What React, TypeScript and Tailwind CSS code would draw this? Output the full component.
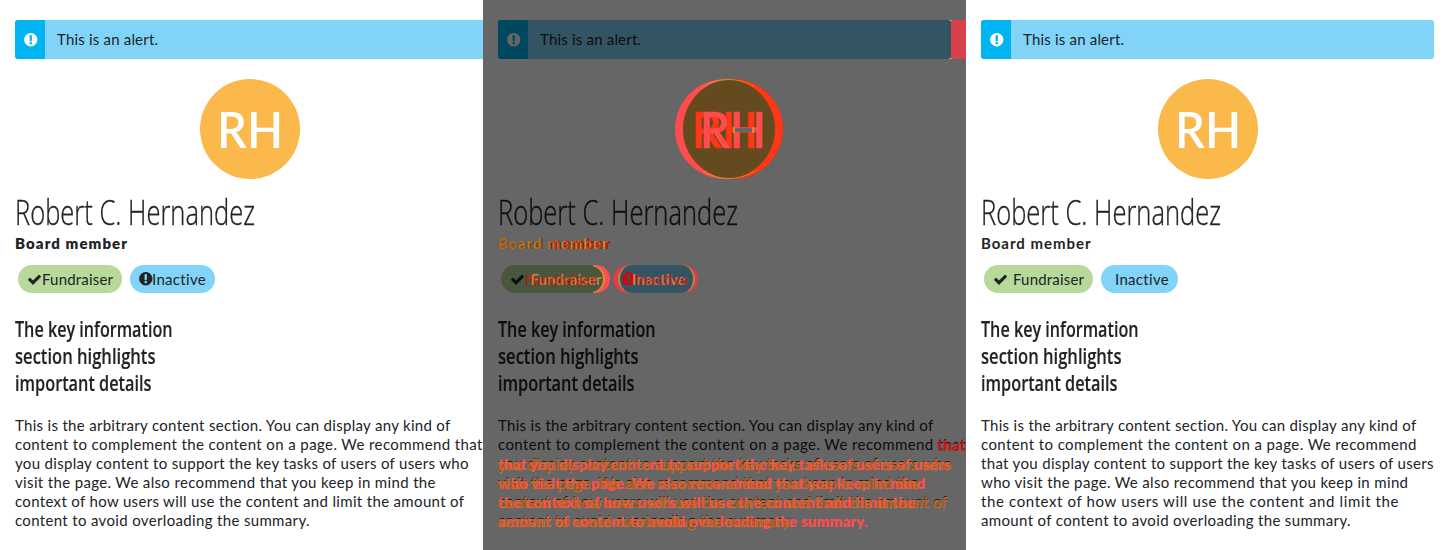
import { useLayoutEffect, useRef, useState } from "react";

type FitProps = { text: string; width: number; squeeze?: boolean; className?: string };

/* Sets a run of text to an exact width, by tracking or by condensing the glyphs. */
function Fit({ text, width, squeeze = false, className = "" }: FitProps) {
  const ref = useRef<HTMLSpanElement>(null);
  const [natural, setNatural] = useState(0);
  useLayoutEffect(() => {
    if (ref.current && !natural) setNatural(ref.current.getBoundingClientRect().width);
  }, [natural]);
  const style = !natural
    ? {}
    : squeeze
      ? { transform: `scaleX(${width / natural})` }
      : { letterSpacing: `${(width - natural) / (text.length - 1)}px` };
  return (
    <span ref={ref} style={style} className={`inline-block w-max origin-left whitespace-nowrap ${className}`}>
      {text}
    </span>
  );
}

function Check({ className = "" }: { className?: string }) {
  return (
    <svg viewBox="0 0 1792 1792" fill="currentColor" className={`size-[15px] shrink-0 ${className}`}>
      <path d="M1671 566q0 40-28 68l-724 724-136 136q-28 28-68 28t-68-28l-136-136-362-362q-28-28-28-68t28-68l136-136q28-28 68-28t68 28l294 295 656-657q28-28 68-28t68 28l136 136q28 28 28 68z" />
    </svg>
  );
}

function Exclamation({ className = "" }: { className?: string }) {
  return (
    <svg viewBox="0 0 1792 1792" fill="currentColor" className={`size-[15.5px] shrink-0 ${className}`}>
      <path d="M896 128q209 0 385.500 103t279.500 279.500 103 385.500-103 385.500-279.500 279.500-385.500 103-385.500-103-279.500-279.500-103-385.500 103-385.500 279.500-279.500 385.500-103zm128 1247v-190q0-14-9-23.500t-22-9.500h-192q-13 0-23 10t-10 23v188q0 13 10 23t23 10h192q13 0 22-9.500t9-23.500zm-2-344l18-621q0-12-10-18-10-8-24-8h-220q-14 0-24 8-10 6-10 18l17 621q0 10 10 17.500t24 7.500h185q14 0 23.500-7.500t10.500-17.500z" />
    </svg>
  );
}

const beforeLines: [string, number][] = [
  ["This is the arbitrary content section. You can display any kind of", 435.5],
  ["content to complement the content on a page. We recommend that", 467.5],
  ["you display content to support the key tasks of users of users who", 453.5],
  ["visit the page. We also recommend that you keep in mind the", 420.5],
  ["context of how users will use the content and limit the amount of", 449],
  ["content to avoid overloading the summary.", 294.5],
];

const afterLines: [string, number][] = [
  ["This is the arbitrary content section. You can display any kind of", 435.5],
  ["content to complement the content on a page. We recommend", 435.5],
  ["that you display content to support the key tasks of users of users", 452.5],
  ["who visit the page. We also recommend that you keep in mind", 427],
  ["the context of how users will use the content and limit the", 417.5],
  ["amount of content to avoid overloading the summary.", 369.5],
];

function Lines({ lines, className = "" }: { lines: [string, number][]; className?: string }) {
  return (
    <div className={`flex flex-col text-[15px] leading-[19px] ${className}`}>
      {lines.map(([text, width]) => (
        <div key={text} className="h-[19px]">
          <Fit text={text} width={width} />
        </div>
      ))}
    </div>
  );
}

function Summary({ after = false }: { after?: boolean }) {
  return (
    <section className="flex h-[550px] w-[483px] flex-col overflow-hidden bg-white pl-[15px] pt-5 text-[#212327]">
      <div
        className={`flex h-[39px] shrink-0 overflow-hidden bg-[#81d4f7] ${after ? "w-[453px] rounded-[3px]" : "w-[468px] rounded-l-[3px]"}`}
      >
        <div className="flex w-[30px] items-center justify-center bg-[#00b4f1] pl-px text-white">
          <Exclamation />
        </div>
        <div className="pl-3 text-[15px] leading-[39px]">
          <Fit text="This is an alert." width={101} />
        </div>
      </div>

      <div className={`mt-5 flex shrink-0 ${after ? "pl-[177px]" : "pl-[185px]"}`}>
        <div className="flex size-[100px] justify-start rounded-full bg-[#fbb84b] pl-[17px] text-[50px] font-semibold leading-[101px] text-white">
          <Fit text="RH" width={66} squeeze />
        </div>
      </div>

      <h1 className="mt-[13px] h-10 shrink-0 font-['Open_Sans','Noto_Sans',sans-serif] text-[34px] font-light leading-10 [-webkit-text-stroke:0.35px_currentColor]">
        <Fit text="Robert C. Hernandez" width={240} squeeze />
      </h1>
      <div className="mt-0.5 h-[19px] shrink-0 text-[15px] leading-[19px]">
        <Fit
          text="Board member"
          width={after ? 109.5 : 112}
          className={after ? "font-bold" : "font-extrabold"}
        />
      </div>

      <div className="ml-[3px] mt-3 flex h-7 shrink-0 gap-2 text-[15px]">
        <div className={`flex items-center rounded-full bg-[#b7da9b] pl-[9px] ${after ? "w-[109px]" : "w-[104px]"}`}>
          <Check />
          <span className={after ? "pl-[5px] leading-7" : "pt-px leading-[27px]"}>
            <Fit text="Fundraiser" width={71} />
          </span>
        </div>
        <div className={`flex items-center rounded-full bg-[#81d4f7] ${after ? "w-[77px] pl-[14px]" : "w-[85px] pl-2"}`}>
          {!after && <Exclamation className="-mr-1" />}
          <span className={after ? "leading-7" : "pl-[2.5px] pt-px leading-[27px]"}>
            <Fit text="Inactive" width={54} />
          </span>
        </div>
      </div>

      <h2 className="mt-[23px] flex shrink-0 flex-col font-['Open_Sans','Noto_Sans',sans-serif] text-[21px] font-semibold leading-[27px] [-webkit-text-stroke:0.15px_currentColor]">
        <Fit text="The key information" width={157.5} squeeze />
        <Fit text="section highlights" width={140.5} squeeze />
        <Fit text="important details" width={136.5} squeeze />
      </h2>
      <Lines lines={after ? afterLines : beforeLines} className="mt-[19px]" />
    </section>
  );
}

/* Layer of differing pixels drawn over the dimmed summary. */
function Changes() {
  return (
    <>
      <div className="absolute right-0 top-5 h-[39px] w-[15px] bg-[#d9404b]" />
      <i className="absolute right-[14px] top-5 h-px w-[3px] bg-[#d9903f]" />
      <i className="absolute right-[14px] top-[58px] h-px w-[3px] bg-[#d9903f]" />

      <svg viewBox="0 0 108 100" className="absolute left-[192px] top-[79px] h-[100px] w-[108px]">
        <clipPath id="shared">
          <circle cx="50" cy="50" r="50" />
        </clipPath>
        <circle cx="50" cy="50" r="50" fill="#ff4c4c" />
        <circle cx="58" cy="50" r="50" fill="#ff3717" />
        <circle cx="58" cy="50" r="50" fill="#644a1e" clipPath="url(#shared)" />
        <path d="M28 8Q40 .5 54 .5M54 99.500Q40 99.500 28 92" fill="none" stroke="#d9903f" />
        <path d="M54 .5Q67 .5 80 8M54 99.500Q67 99.500 80 92" fill="none" stroke="#d97d18" />
      </svg>
      <div className="absolute left-[209px] top-[79px] text-[50px] font-semibold leading-[101px] text-[#ff3717] [-webkit-text-stroke:0.6px_currentColor]">
        <Fit text="RH" width={66} squeeze />
      </div>
      <div className="absolute left-[217px] top-[79px] text-[50px] font-semibold leading-[101px] text-[#ff4c4c] [-webkit-text-stroke:0.6px_currentColor]">
        <Fit text="RH" width={66} squeeze />
      </div>
      <i className="absolute left-[252px] top-32 h-1 w-[17px] bg-[#666]" />
      <i className="absolute left-[250px] top-[127px] h-1.5 w-0.5 bg-[#d98a30]" />
      <i className="absolute left-[269px] top-[127px] h-1.5 w-0.5 bg-[#d98a30]" />

      <div className="absolute left-[15px] top-[234px] text-[15px] font-bold leading-[19px] text-[#d98a30]">
        <Fit text="Board member" width={109.5} />
      </div>
      <div className="absolute left-[15px] top-[234px] text-[15px] font-extrabold leading-[19px]">
        <Fit
          text="Board member"
          width={112}
          className="bg-linear-to-r from-[#a05a20]/70 from-35% to-[#d03010]/85 to-50% bg-clip-text text-transparent"
        />
      </div>

      <div className="absolute left-[18px] top-[265px] h-7 w-[109px] rounded-full bg-[#ff4c4c] [clip-path:inset(0_0_0_92px)]" />
      <div className="absolute left-[18px] top-[265px] h-7 w-[104px] rounded-full border-y border-r-2 border-[#d9903f] bg-[#495740] [clip-path:inset(0_0_0_92px)]" />
      <div className="absolute left-[130px] top-[265px] h-7 w-[85px] rounded-full bg-[#d9404b]" />
      <div className="absolute left-[135px] top-[265px] h-7 w-[77px] rounded-full border-x-2 border-[#b8893f] bg-[#335563]" />
      <Exclamation className="absolute left-[137.5px] top-[271px] text-[#c80a0a]" />
      <div className="absolute left-[47.5px] top-[265px] text-[15px] font-semibold leading-7 text-[#d98138]">
        <Fit text="Fundraiser" width={71} />
      </div>
      <div className="absolute left-[42px] top-[266px] text-[15px] font-semibold leading-[27px] text-[#d0301a]/85">
        <Fit text="Fundraiser" width={71} />
      </div>
      <div className="absolute left-[149px] top-[265px] text-[15px] font-semibold leading-7 text-[#c88448]">
        <Fit text="Inactive" width={54} />
      </div>
      <div className="absolute left-[152px] top-[266px] text-[15px] font-semibold leading-[27px] text-[#c92018]/85">
        <Fit text="Inactive" width={54} />
      </div>

      <div className="absolute left-[454px] top-[436px] text-[15px] font-bold leading-[19px] text-[#df1212]">
        <Fit text="that" width={28.5} />
      </div>
      <Lines lines={afterLines.slice(2)} className="absolute left-[15px] top-[455px] font-extrabold text-[#ff4c4c]" />
      <Lines
        lines={beforeLines.slice(2)}
        className="absolute left-[15px] top-[455px] font-bold text-[#c4581c]/90 [-webkit-text-stroke:0.5px_#d9903fb0]"
      />
    </>
  );
}

export default function App() {
  return (
    <main className="flex h-[550px] w-[1449px] overflow-hidden bg-white font-[Lato,sans-serif]">
      <Summary />
      <div className="relative h-[550px] w-[483px] overflow-hidden">
        <Summary />
        <div className="absolute inset-0 bg-black/60" />
        <Changes />
      </div>
      <Summary after />
    </main>
  );
}
